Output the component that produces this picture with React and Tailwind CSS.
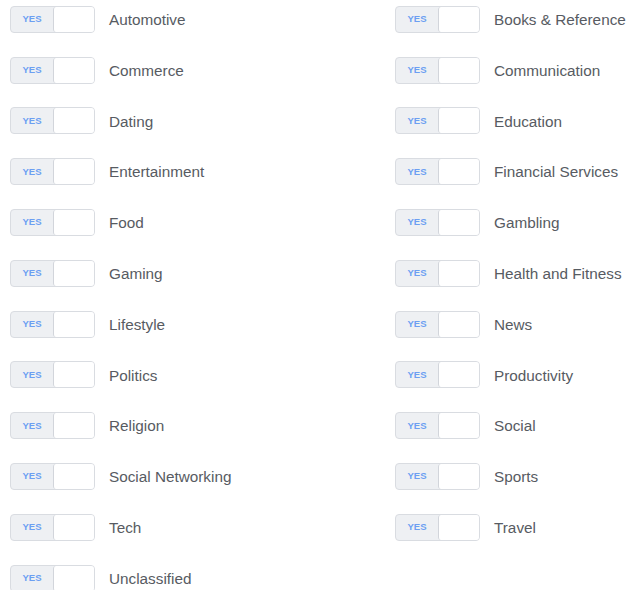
import React, { useState } from "react";

const CATEGORIES = [
  ["Automotive", "Books & Reference"],
  ["Commerce", "Communication"],
  ["Dating", "Education"],
  ["Entertainment", "Financial Services"],
  ["Food", "Gambling"],
  ["Gaming", "Health and Fitness"],
  ["Lifestyle", "News"],
  ["Politics", "Productivity"],
  ["Religion", "Social"],
  ["Social Networking", "Sports"],
  ["Tech", "Travel"],
  ["Unclassified", null],
];

const Toggle = ({ on, onClick }) => (
  <button
    onClick={onClick}
    className="flex h-[27px] w-[85px] shrink-0 items-stretch rounded-[4px] border border-[#d9dce1] bg-[#eef0f3] p-0"
  >
    <span className="flex w-[42px] items-center justify-center text-[9.5px] font-bold text-[#6c9ff2]">
      {on ? "YES" : "NO"}
    </span>
    <span className="flex-1 rounded-[3px] border-l border-[#d2d5db] bg-white" />
  </button>
);

const Item = ({ label }) => {
  const [on, setOn] = useState(true);
  return (
    <div className="flex h-[50.8px] items-center">
      <Toggle on={on} onClick={() => setOn(!on)} />
      <span className="ml-[14px] mt-[2px] text-[15.3px] text-[#575b62]">{label}</span>
    </div>
  );
};

export default function App() {
  return (
    <div
      className="h-[590px] overflow-hidden bg-white pl-[10px]"
      style={{ fontFamily: "'Liberation Sans', Arial, sans-serif" }}
    >
      <div className="-mt-[6px] grid grid-cols-[385px_1fr]">
        {CATEGORIES.map(([left, right]) => (
          <React.Fragment key={left}>
            <Item label={left} />
            {right ? <Item label={right} /> : <div />}
          </React.Fragment>
        ))}
      </div>
    </div>
  );
}
